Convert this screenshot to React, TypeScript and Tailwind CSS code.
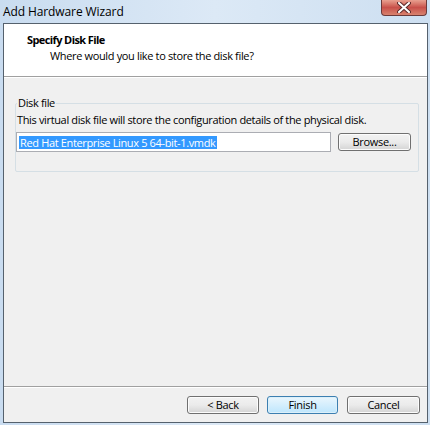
import React from "react";

const font = { fontFamily: '"Segoe UI", "Open Sans", "Noto Sans", Arial, sans-serif' };

function Btn({ label, def = false, w = "w-[72px]" }: { label: string; def?: boolean; w?: string }) {
  return (
    <div
      className={`${w} h-[18px] rounded-[3px] border flex items-center justify-center text-[11px] tracking-[-0.3px] text-black ${
        def
          ? "border-[#3c7fb1] bg-gradient-to-b from-[#eaf6fd] to-[#bee6fd] shadow-[inset_0_0_0_1px_#dcf0fa]"
          : "border-[#707070] bg-gradient-to-b from-[#f2f2f2] via-[#ebebeb] to-[#d4d4d4] shadow-[inset_0_0_0_1px_#fcfcfc]"
      }`}
    >
      {label}
    </div>
  );
}

export default function App() {
  return (
    <div
      className="w-[430px] h-[425px] overflow-hidden relative flex flex-col bg-gradient-to-r from-[#c9dcf0] via-[#dce9f6] to-[#cddff1]"
      style={font}
    >
      {/* title bar */}
      <div className="h-[23px] flex items-center pl-[3px] text-[12px] tracking-[-0.1px] text-black">Add Hardware Wizard</div>
      <div className="absolute top-0 right-[3px] w-[46px] h-[16px] rounded-b-[4px] border border-t-0 border-[#6b3a3a] bg-gradient-to-b from-[#e8a090] via-[#c8504a] to-[#d8826e] flex items-center justify-center">
        <svg width="14" height="11" viewBox="0 0 14 11">
          <path d="M2 1 L12 10 M12 1 L2 10" stroke="#5a2a2a" strokeWidth="4" strokeLinecap="round" />
          <path d="M2 1 L12 10 M12 1 L2 10" stroke="#ffffff" strokeWidth="2" strokeLinecap="round" />
        </svg>
      </div>

      {/* window body */}
      <div className="ml-[3px] w-[425px] h-[400px] border border-[#55616d] flex flex-col bg-[#f0f0f0]">
        {/* header */}
        <div className="h-[52px] bg-white flex flex-col pl-[23px] pt-[9px] text-[11px] text-black">
          <div className="font-bold leading-[14px] tracking-[-0.6px]">Specify Disk File</div>
          <div className="pl-[23px] leading-[15px] mt-[1px] tracking-[-0.35px]">Where would you like to store the disk file?</div>
        </div>
        <div className="h-px bg-[#a0a0a0]" />
        <div className="h-px bg-white" />

        {/* content */}
        <div className="flex-1 flex flex-col">
          <div className="mt-[25px] ml-[11px] w-[404px] h-[69px] border border-[#d5dfe5] rounded-[2px] relative">
            <div className="absolute -top-[8px] left-[1px] px-[1px] bg-[#f0f0f0] text-[11px] leading-[14px] tracking-[-0.35px] text-black">
              Disk file
            </div>
            <div className="mt-[9px] ml-[1px] text-[11px] leading-[14px] tracking-[-0.35px] text-black">
              This virtual disk file will store the configuration details of the physical disk.
            </div>
            <div className="mt-[5px] flex items-center gap-[7px]">
              <div className="w-[315px] h-[20px] border border-[#abadb3] bg-white flex items-center pl-[2px]">
                <span className="bg-[#3399ff] text-white text-[11px] leading-[13px] px-[1px] tracking-[-0.35px]">
                  Red Hat Enterprise Linux 5 64-bit-1.vmdk
                </span>
              </div>
              <Btn label="Browse..." w="w-[73px]" />
            </div>
          </div>
          <div className="flex-1" />
          {/* bottom separator */}
          <div className="h-px bg-[#a0a0a0]" />
          <div className="h-px bg-white" />
          <div className="h-[34px] flex items-start justify-end pt-[8px] pr-[7px]">
            <Btn label="< Back" w="w-[72px]" />
            <div className="w-[8px]" />
            <Btn label="Finish" def w="w-[71px]" />
            <div className="w-[9px]" />
            <Btn label="Cancel" w="w-[73px]" />
          </div>
        </div>
      </div>
    </div>
  );
}
